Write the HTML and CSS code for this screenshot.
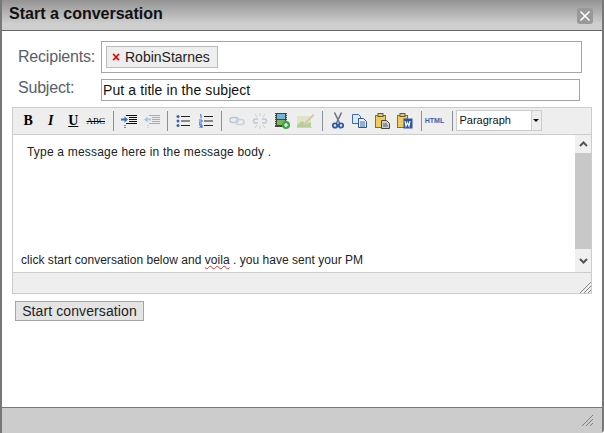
FILE: index.html
```html
<!DOCTYPE html>
<html lang="en">
<head>
    <meta charset="UTF-8">
    <title>Start a conversation</title>
    <link rel="stylesheet" href="styles.css">
</head>
<body>
    <div class="dialog">
        <div class="titlebar">
            <h2>Start a conversation</h2>
            <button type="button" class="close" aria-label="Close">
                <svg width="12" height="12" viewBox="0 0 12 12"><path d="M1.5 1.5l9 9M10.5 1.5l-9 9" stroke="#fff" stroke-width="1.6" fill="none"/></svg>
            </button>
        </div>

        <div class="content">
            <div class="row row-recipients">
                <label>Recipients:</label>
                <div class="recipients">
                    <span class="chip"><span class="chip-x">&#215;</span>RobinStarnes</span>
                </div>
            </div>
            <div class="row row-subject">
                <label for="iSubject">Subject:</label>
                <input type="text" id="iSubject" class="subject" value="Put a title in the subject">
            </div>

            <div class="editor">
                <div class="toolbar">
                    <span class="tool tool-b">B</span>
                    <span class="tool tool-i">I</span>
                    <span class="tool tool-u">U</span>
                    <span class="tool tool-abc">ABC</span>
                    <span class="sep sep-first"></span>
                    <span class="tool">
                        <svg width="16" height="14" viewBox="0 0 16 14"><path d="M5 1.500h11M8 3.500h8M8 5.500h8M8 7.500h8M5 9.500h11" stroke="#111"/><path d="M0 5.500h4" stroke="#2f6fc8" stroke-width="2"/><path d="M3.500 2.500L7 5.500 3.500 8.500z" fill="#2f6fc8"/><path d="M4 11v3" stroke="#222" stroke-dasharray="1 1"/></svg>
                    </span>
                    <span class="tool">
                        <svg width="16" height="14" viewBox="0 0 16 14"><path d="M5 1.500h11M8 3.500h8M8 5.500h8M8 7.500h8M5 9.500h11" stroke="#aaa"/><path d="M3 5.500h4" stroke="#a9c3e6" stroke-width="2"/><path d="M3.500 2.500L0 5.500 3.500 8.500z" fill="#a9c3e6"/><path d="M4 11v3" stroke="#bbb" stroke-dasharray="1 1"/></svg>
                    </span>
                    <span class="sep"></span>
                    <span class="tool">
                        <svg width="14" height="14" viewBox="0 0 14 14"><path d="M5 2.500h9M5 7h9M5 11.500h9" stroke="#222"/><circle cx="2" cy="2.500" r="1.500" fill="#3a62a8"/><circle cx="2" cy="7" r="1.500" fill="#3a62a8"/><circle cx="2" cy="11.500" r="1.500" fill="#3a62a8"/></svg>
                    </span>
                    <span class="tool">
                        <svg width="14" height="14" viewBox="0 0 14 14"><path d="M5 2.500h9M5 7h9M5 11.500h9" stroke="#222"/><path d="M1 1l1-.5v4M0 6h3v2H0v2h3M0 11h3v3H0M1 12.500h2" stroke="#3a6fd0" fill="none"/></svg>
                    </span>
                    <span class="sep"></span>
                    <span class="tool">
                        <svg width="16" height="10" viewBox="0 0 16 10"><rect x="1" y="1.500" width="8" height="5" rx="2.500" fill="none" stroke="#b9c6d6" stroke-width="1.500"/><rect x="7" y="3.500" width="8" height="5" rx="2.500" fill="none" stroke="#c8d2de" stroke-width="1.500"/></svg>
                    </span>
                    <span class="tool">
                        <svg width="16" height="16" viewBox="0 0 16 16"><path d="M6 6H3.500a2 2 0 000 4H6M10 6h2.500a2 2 0 010 4H10" fill="none" stroke="#bcc8d6" stroke-width="1.500"/><path d="M8 0v3M8 13v3M3 1l2 3M13 1l-2 3M3 15l2-3M13 15l-2-3" stroke="#ccc"/></svg>
                    </span>
                    <span class="tool">
                        <svg width="16" height="16" viewBox="0 0 16 16"><rect x="1" y="0" width="12" height="14" fill="#3d4a3a"/><rect x="3" y="1" width="8" height="5" fill="#6fb3d8"/><rect x="3" y="7" width="8" height="5" fill="#7fb35a"/><path d="M1.500 1v12M12.500 1v12" stroke="#ccc" stroke-dasharray="1 1"/><circle cx="12" cy="12" r="4" fill="#3fa34a"/><path d="M10 12h4M12 10v4" stroke="#fff" stroke-width="1.200"/></svg>
                    </span>
                    <span class="tool tool-wide">
                        <svg width="18" height="16" viewBox="0 0 18 16"><rect x="0" y="3" width="14" height="11" fill="#dde6c8"/><path d="M0 12l5-4 4 3 5-2v5H0z" fill="#b9cf9a"/><path d="M6 11L16 1l1.500 1.500L8 12z" fill="#d9c8b0"/><path d="M0 14.500h15" stroke="#c9d6a8"/></svg>
                    </span>
                    <span class="sep"></span>
                    <span class="tool">
                        <svg width="12" height="17" viewBox="0 0 12 17"><path d="M2.500 0.500L7.500 11M9.500 0.500L4.500 11" stroke="#6b7480" stroke-width="1.600" fill="none"/><circle cx="3" cy="13.500" r="2.200" fill="none" stroke="#2a55a8" stroke-width="1.800"/><circle cx="9" cy="13.500" r="2.200" fill="none" stroke="#2a55a8" stroke-width="1.800"/></svg>
                    </span>
                    <span class="tool">
                        <svg width="16" height="14" viewBox="0 0 16 14"><path d="M0.500 0.500h6l2 2v7h-8z" fill="#dfe9f8" stroke="#3f68b0"/><path d="M6.500 4.500h5l3 3v6h-8z" fill="#eef3fb" stroke="#2c55a0"/><path d="M8 8h5M8 10h5M8 12h5" stroke="#3f68b0"/></svg>
                    </span>
                    <span class="tool">
                        <svg width="16" height="16" viewBox="0 0 16 16"><rect x="0.500" y="2.500" width="10" height="12" fill="#f0cc5e" stroke="#8a6d20"/><rect x="3" y="0.500" width="5" height="3" fill="#d8c79a" stroke="#6e5a20"/><path d="M6.500 7.500h5l3 3v5h-8z" fill="#d0d0d0" stroke="#444"/><path d="M8 11h4M8 13h5" stroke="#555"/></svg>
                    </span>
                    <span class="tool">
                        <svg width="16" height="16" viewBox="0 0 16 16"><rect x="0.500" y="2.500" width="10" height="12" fill="#f0cc5e" stroke="#8a6d20"/><rect x="3" y="0.500" width="5" height="3" fill="#d8c79a" stroke="#6e5a20"/><rect x="6.500" y="5.500" width="9" height="10" fill="#2c55a0"/><path d="M8 8l1 5 1.500-3.500L12 13l1-5" stroke="#fff" fill="none" stroke-width="1.200"/></svg>
                    </span>
                    <span class="sep"></span>
                    <span class="tool tool-html">HTML</span>
                    <span class="sep"></span>
                    <div class="format">
                        <span class="format-value">Paragraph</span>
                        <span class="format-arrow"></span>
                    </div>
                </div>

                <div class="editor-body">
                    <div class="message">
                        <p class="line-first">Type a message here in the message body .</p>
                        <p class="line-last">click start conversation below and <span class="misspelt">voila</span> . you have sent your PM</p>
                    </div>
                    <div class="scrollbar">
                        <span class="scroll-btn">
                            <svg width="9" height="6" viewBox="0 0 9 6"><path d="M1 5l3.500-3.500L8 5" stroke="#555" stroke-width="2" fill="none"/></svg>
                        </span>
                        <span class="scroll-thumb"></span>
                        <span class="scroll-btn scroll-btn-down">
                            <svg width="9" height="6" viewBox="0 0 9 6"><path d="M1 1l3.500 3.500L8 1" stroke="#555" stroke-width="2" fill="none"/></svg>
                        </span>
                    </div>
                </div>

                <div class="statusbar">
                    <svg width="11" height="11" viewBox="0 0 11 11"><path d="M0 11L11 0M4 11l7-7M8 11l3-3" stroke="#888" fill="none"/></svg>
                </div>
            </div>

            <button type="button" class="start">Start conversation</button>
        </div>

        <div class="footer">
            <svg width="11" height="11" viewBox="0 0 11 11"><path d="M0 11L11 0M4 11l7-7M8 11l3-3" stroke="#808080" fill="none"/></svg>
        </div>
    </div>
</body>
</html>
```

FILE: styles.css
```css
html, body {
    margin: 0;
    background: #fff;
}

body {
    font-family: "Liberation Sans", Arial, sans-serif;
    width: 604px;
    height: 433px;
    overflow: hidden;
}

.dialog {
    box-sizing: border-box;
    width: 604px;
    height: 433px;
    display: flex;
    flex-direction: column;
    border-left: 2px solid #777;
    border-right: 2px solid #777;
    border-bottom-right-radius: 4px;
    background: #fff;
}

.titlebar {
    box-sizing: border-box;
    height: 31px;
    flex: none;
    display: flex;
    justify-content: space-between;
    align-items: center;
    padding: 0 9px 2px 7px;
    border-bottom: 1px solid #666;
    background: linear-gradient(#939393, #cfcfcf 80%);
}

.titlebar h2 {
    margin: 0;
    font-size: 16px;
    font-weight: bold;
    color: #111;
}

.close {
    width: 16px;
    height: 16px;
    padding: 0;
    margin-top: 3px;
    display: flex;
    align-items: center;
    justify-content: center;
    border: 0;
    border-radius: 3px;
    background: #999;
}

.content {
    flex: 1;
    padding: 10px 10px 0 10px;
}

.row {
    display: flex;
    padding-left: 6px;
}

.row label {
    width: 83px;
    font-size: 16px;
    letter-spacing: -0.2px;
    color: #5a6068;
}

.row-recipients {
    align-items: center;
    margin-bottom: 6px;
}

.row-subject {
    margin-bottom: 6px;
}

.recipients {
    box-sizing: border-box;
    width: 481px;
    height: 32px;
    padding: 4px;
    border: 1px solid #a5a5a5;
}

.chip {
    box-sizing: border-box;
    display: inline-flex;
    align-items: center;
    width: 112px;
    height: 22px;
    padding-left: 5px;
    border: 1px solid #bbb;
    background: #eee;
    font-size: 14px;
    color: #222;
}

.chip-x {
    width: 13px;
    font-size: 14px;
    font-weight: bold;
    color: #e00000;
}

.subject {
    box-sizing: border-box;
    width: 479px;
    height: 22px;
    padding: 0 1px;
    border: 1px solid #a5a5a5;
    font-family: inherit;
    font-size: 14px;
    letter-spacing: 0.1px;
    color: #111;
}

.editor {
    box-sizing: border-box;
    width: 580px;
    border: 1px solid #ccc;
}

.toolbar {
    box-sizing: border-box;
    height: 27px;
    display: flex;
    align-items: center;
    padding: 0 0 1px 4px;
    border-bottom: 1px solid #ccc;
    background: #eee;
}

.tool {
    width: 22.5px;
    height: 22px;
    display: flex;
    align-items: center;
    justify-content: center;
    flex: none;
    color: #000;
}

.tool-wide {
    width: 24px;
}

.tool-b, .tool-i, .tool-u {
    font-family: "Liberation Serif", serif;
    font-size: 14px;
    font-weight: bold;
}

.tool-i {
    font-style: italic;
}

.tool-u {
    text-decoration: underline;
}

.tool-abc {
    font-family: "Liberation Serif", serif;
    font-size: 9px;
    text-decoration: line-through;
}

.tool-html {
    font-size: 7px;
    font-weight: bold;
    color: #3460b0;
    width: 18px;
    margin-right: 4px;
}

.sep {
    flex: none;
    width: 1px;
    height: 20px;
    margin: 0 4px;
    background: #8a8f98;
}

.sep-first {
    margin-left: 6px;
}

.format {
    box-sizing: border-box;
    width: 86px;
    height: 21px;
    margin-left: -1px;
    display: flex;
    border: 1px solid #ccc;
    background: #fff;
}

.format-value {
    flex: 1;
    padding-left: 3px;
    font-size: 11px;
    line-height: 18px;
    color: #111;
}

.format-arrow {
    box-sizing: border-box;
    position: relative;
    width: 10px;
    border-left: 1px solid #ccc;
    background: #eee;
}

.format-arrow::after {
    content: "";
    position: absolute;
    left: 1px;
    top: 8px;
    border-left: 3px solid transparent;
    border-right: 3px solid transparent;
    border-top: 3px solid #111;
}

.editor-body {
    height: 137px;
    display: flex;
    background: #fff;
}

.message {
    flex: 1;
    display: flex;
    flex-direction: column;
    justify-content: space-between;
    padding: 10px 0 5px 8px;
    font-size: 12px;
    color: #222;
}

.message p {
    margin: 0;
}

.line-first {
    padding-left: 6px;
    letter-spacing: 0.2px;
}

.line-last {
    letter-spacing: 0.03px;
}

.misspelt {
    text-decoration: underline wavy #e03030 1px;
}

.scrollbar {
    width: 16px;
    display: flex;
    flex-direction: column;
    background: #f0f0f0;
}

.scroll-btn {
    height: 18px;
    display: flex;
    align-items: center;
    justify-content: center;
}

.scroll-btn-down {
    height: 23px;
}

.scroll-thumb {
    flex: 1;
    background: #c8c8c8;
}

.statusbar {
    box-sizing: border-box;
    height: 21px;
    display: flex;
    justify-content: flex-end;
    align-items: flex-end;
    border-top: 1px solid #ccc;
    background: #eee;
}

.start {
    display: block;
    box-sizing: border-box;
    width: 129px;
    height: 20px;
    margin: 7px 0 0 3px;
    padding: 0;
    border: 1px solid #a5a5a5;
    background: #e4e4e4;
    font-family: inherit;
    font-size: 14px;
    letter-spacing: 0.1px;
    color: #222;
}

.footer {
    box-sizing: border-box;
    height: 26px;
    flex: none;
    display: flex;
    justify-content: flex-end;
    align-items: center;
    padding: 0 9px 0 0;
    border-top: 1px solid #777;
    background: #ccc;
}
```
